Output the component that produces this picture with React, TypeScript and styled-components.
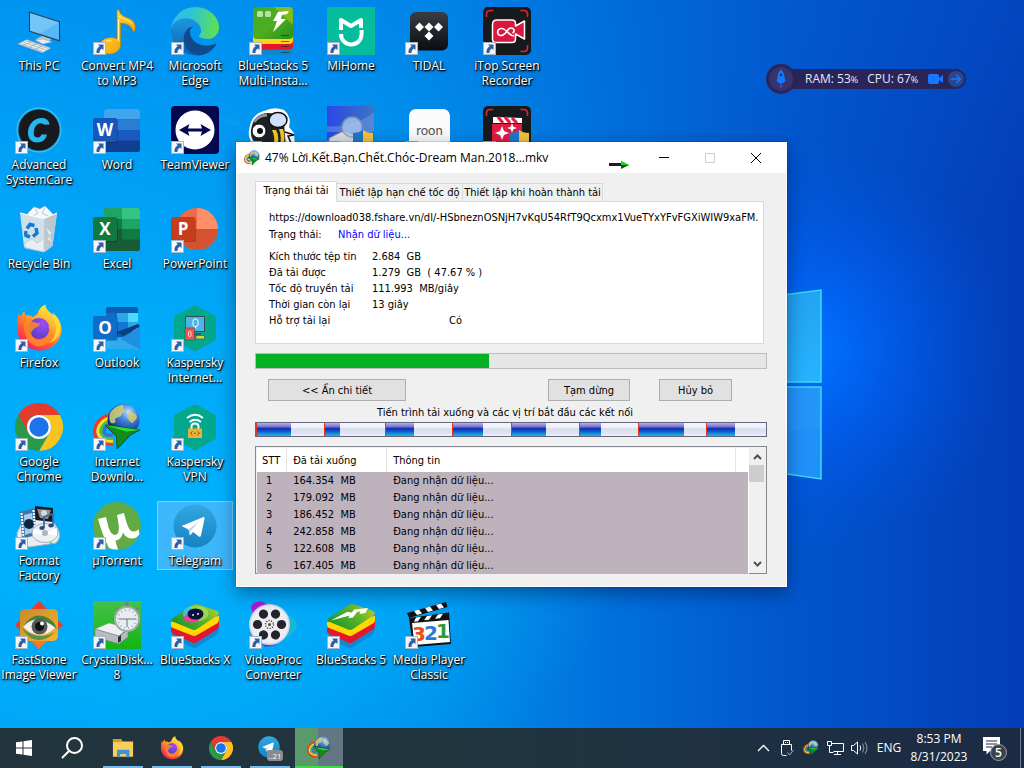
import React from 'react';
import styled, { createGlobalStyle } from 'styled-components';

const uiFont = '"Open Sans", "Noto Sans", sans-serif';
const dialogFont = '"DejaVu Sans Condensed", "DejaVu Sans", "Noto Sans", sans-serif';

const GlobalStyle = createGlobalStyle`
  *, *::before, *::after { box-sizing: border-box; }
  html, body { margin: 0; padding: 0; overflow: hidden; }
  body { font-family: ${uiFont}; font-size: 12px; }
  button, input, table { font: inherit; color: inherit; }
  button { margin: 0; padding: 0; border: 0; background: none; }
`;

/* ---------- Desktop ---------- */

const Screen = styled.div`
  display: flex;
  flex-direction: column;
  height: 100vh;
  min-height: 600px;
`;

const Desktop = styled.main`
  position: relative;
  flex: 1;
  overflow: hidden;
  background: #0a8ff0;
`;

const Wallpaper = styled.svg`
  position: absolute;
  inset: 0;
  width: 100%;
  height: 100%;
`;

const IconGrid = styled.div`
  position: relative;
  display: grid;
  grid-template-columns: repeat(7, 78px);
  grid-template-rows: repeat(7, 99px);
  padding-top: 6px;
`;

const Shortcut = styled.a<{ $col: number; $row: number; $selected?: boolean }>`
  grid-column: ${(p) => p.$col};
  grid-row: ${(p) => p.$row};
  align-self: start;
  justify-self: center;
  display: flex;
  flex-direction: column;
  align-items: center;
  gap: 3px;
  width: 76px;
  padding-bottom: 1px;
  color: #fff;
  text-decoration: none;
  border: 1px solid ${(p) => (p.$selected ? 'rgba(160, 215, 255, 0.7)' : 'transparent')};
  background: ${(p) => (p.$selected ? 'rgba(120, 190, 250, 0.5)' : 'transparent')};
`;

const ShortcutArt = styled.svg`
  display: block;
  width: 48px;
  height: 48px;
  overflow: visible;
`;

const ShortcutLabel = styled.span`
  display: block;
  font-size: 12px;
  line-height: 15px;
  text-align: center;
  white-space: nowrap;
  text-shadow: 1px 1px 1px #000, 0 1px 2px rgba(0, 0, 0, 0.9), 1px 1px 3px rgba(0, 0, 0, 0.6);
`;

const LabelLine = styled.span`
  display: block;
`;

/* ---------- Performance widget ---------- */

const Widget = styled.aside`
  position: absolute;
  top: 64px;
  right: 58px;
  display: flex;
  align-items: center;
  width: 200px;
  height: 30px;
`;

const WidgetBadge = styled.svg`
  position: relative;
  flex: none;
  width: 30px;
  height: 30px;
`;

const WidgetPill = styled.div`
  display: flex;
  align-items: center;
  flex: 1;
  height: 20px;
  margin-left: -10px;
  padding-left: 19px;
  padding-right: 2px;
  gap: 9px;
  border-radius: 0 10px 10px 0;
  background: #29255a;
  color: #e6e8f5;
  font-size: 12px;
  line-height: 20px;
  white-space: nowrap;
`;

const Small = styled.small`
  font-size: 9px;
`;

const WidgetIcons = styled.span`
  display: flex;
  align-items: center;
  gap: 5px;
  margin-left: auto;
`;

const WidgetButton = styled.button`
  display: grid;
  place-items: center;
  height: 16px;
`;

/* ---------- Download dialog ---------- */

const Dialog = styled.section`
  position: absolute;
  top: 142px;
  left: 236px;
  width: 551px;
  border: 1px solid #fff;
  background: #f0f0f0;
  color: #000;
  font-family: ${dialogFont};
  font-size: 11px;
  line-height: 16px;
  box-shadow: 0 6px 18px rgba(0, 10, 50, 0.45), 0 0 1px rgba(0, 20, 60, 0.7);
`;

const TitleBar = styled.header`
  display: flex;
  align-items: center;
  height: 30px;
  padding: 0 7px;
  background: #fff;
  font-family: ${uiFont};
`;

const Title = styled.h1`
  flex: 1;
  margin: 0 0 0 5px;
  font-size: 12px;
  font-weight: 400;
  line-height: 16px;
  white-space: nowrap;
`;

const DragArrow = styled.svg`
  width: 20px;
  height: 22px;
  margin-right: 12px;
`;

const WindowButton = styled.button`
  display: grid;
  place-items: center;
  width: 46px;
  height: 28px;
`;

const DialogBody = styled.div`
  padding: 8px 19px 12px 18px;
`;

const TabList = styled.div`
  display: flex;
  align-items: flex-end;
  height: 20px;
`;

const Tab = styled.button<{ $active?: boolean; $width: number }>`
  position: relative;
  z-index: ${(p) => (p.$active ? 1 : 0)};
  width: ${(p) => p.$width}px;
  height: ${(p) => (p.$active ? 21 : 18)}px;
  margin-bottom: ${(p) => (p.$active ? -1 : 0)}px;
  padding-bottom: ${(p) => (p.$active ? 2 : 0)}px;
  border: 1px solid #d9d9d9;
  border-bottom: 0;
  border-left-width: ${(p) => (p.$active ? 1 : 0)}px;
  background: ${(p) => (p.$active ? '#fff' : '#f0f0f0')};
  line-height: 18px;
  white-space: nowrap;
`;

const Panel = styled.div`
  height: 143px;
  margin-right: 3px;
  padding: 8px 3px 0 13px;
  border: 1px solid #d9d9d9;
  background: #fff;
`;

const UrlField = styled.input`
  display: block;
  width: 100%;
  height: 16px;
  padding: 0;
  border: 0;
  background: transparent;
  outline: 0;
`;

const Details = styled.dl`
  display: grid;
  grid-template-columns: 103px 1fr;
  grid-auto-rows: 16px;
  margin: 6px 0 0;
  white-space: pre;
`;

const StatusRow = styled(Details)`
  grid-template-columns: 69px 1fr;
  margin-top: 1px;
`;

const Term = styled.dt``;

const Value = styled.dd<{ $link?: boolean; $inset?: boolean }>`
  margin: 0;
  padding-left: ${(p) => (p.$inset ? 77 : 0)}px;
  color: ${(p) => (p.$link ? '#0000ff' : 'inherit')};
`;

const Progress = styled.progress`
  display: block;
  width: 100%;
  height: 16px;
  margin-top: 9px;
  appearance: none;
  border: 1px solid #bcbcbc;
  background: #e6e6e6;
  &::-webkit-progress-bar { background: #e6e6e6; }
  &::-webkit-progress-value { background: #06b025; }
`;

const ButtonRow = styled.div`
  display: flex;
  justify-content: space-between;
  margin-top: 10px;
  padding: 0 35px 0 13px;
`;

const ButtonGroup = styled.div`
  display: flex;
  gap: 29px;
`;

const PushButton = styled.button<{ $width: number }>`
  width: ${(p) => p.$width}px;
  height: 22px;
  padding-top: 2px;
  border: 1px solid #adadad;
  background: #e1e1e1;
`;

const Caption = styled.p`
  margin: 4px 0 1px;
  padding-right: 12px;
  text-align: center;
`;

const SegmentBar = styled.div`
  display: flex;
  height: 15px;
  border: 1px solid #62667e;
`;

const Segment = styled.span<{ $size: number; $done: boolean }>`
  flex: ${(p) => p.$size} 1 0;
  box-shadow: ${(p) => (p.$done ? 'inset 1px 0 #e8301c' : 'none')};
  background: ${(p) =>
    p.$done
      ? 'linear-gradient(#b4b0ee 0%, #7a74d0 28%, #5a58c4 34%, #0f34b4 42%, #1250c4 62%, #1590dc 82%, #19b4ee 100%)'
      : 'linear-gradient(#f4f5fc 0%, #eef0f9 35%, #d9dded 45%, #dfe3f1 75%, #eef0f9 100%)'};
`;

const ListBox = styled.div`
  display: flex;
  height: 128px;
  margin-top: 9px;
  padding: 1px;
  border: 1px solid #828790;
  background: #f0f0f0;
`;

const ListTable = styled.table`
  flex: 1;
  border-collapse: separate;
  border-spacing: 0;
  table-layout: fixed;
  border-right: 1px solid #fff;
  background: #beb2bc;
  white-space: pre;
`;

const HeadCell = styled.th<{ $width?: number }>`
  width: ${(p) => (p.$width ? `${p.$width}px` : 'auto')};
  height: 24px;
  padding: 2px 6px 0;
  border-right: 1px solid #e2e2e2;
  background: #fff;
  font-weight: 400;
  text-align: left;
  &:first-child { padding-left: 5px; }
  &:last-child { border-right: 0; }
`;

const Cell = styled.td<{ $number?: boolean }>`
  height: 17px;
  padding: 1px ${(p) => (p.$number ? 9 : 6)}px 0;
  line-height: 16px;
`;

const ScrollBar = styled.div`
  display: flex;
  flex-direction: column;
  width: 16px;
  background: #f0f0f0;
`;

const ScrollButton = styled.button`
  display: grid;
  place-items: center;
  height: 17px;
`;

const ScrollThumb = styled.div`
  height: 17px;
  margin-right: 1px;
  margin-bottom: auto;
  background: #cdcdcd;
`;

/* ---------- Taskbar ---------- */

const Taskbar = styled.footer`
  display: flex;
  flex: none;
  height: 40px;
  background: linear-gradient(90deg, #22353d 0%, #20343f 50%, #1b2b45 100%);
  color: #fff;
  font-size: 12px;
`;

const TaskGroup = styled.div<{ $gap?: boolean }>`
  display: flex;
  gap: ${(p) => (p.$gap ? 1 : 0)}px;
  padding-left: ${(p) => (p.$gap ? 3 : 0)}px;
`;

const TaskButton = styled.button<{ $state?: 'open' | 'busy' }>`
  position: relative;
  display: grid;
  place-items: center;
  width: 48px;
  height: 40px;
  background: ${(p) =>
    p.$state === 'busy' ? 'linear-gradient(90deg, #5a9a6a 48%, #647681 48%)' : 'transparent'};
  &::after {
    content: '';
    position: absolute;
    bottom: 0;
    left: ${(p) => (p.$state === 'busy' ? 0 : 4)}px;
    right: ${(p) => (p.$state === 'busy' ? 0 : 4)}px;
    height: ${(p) => (p.$state ? 2 : 0)}px;
    background: ${(p) => (p.$state === 'busy' ? '#42d94a' : '#76b9ed')};
  }
`;

const Tray = styled.div`
  display: flex;
  align-items: center;
  margin-left: auto;
`;

const TrayButton = styled.button<{ $width: number }>`
  display: grid;
  place-items: center;
  width: ${(p) => p.$width}px;
  height: 40px;
  line-height: 18px;
`;

const ShowDesktop = styled.button`
  width: 4px;
  height: 40px;
  border-left: 1px solid #6d7d8c;
`;

const ClockLine = styled.span`
  display: block;
`;

/* ---------- Drawings ---------- */

const OfficeBadge = ({ letter, fill }: { letter: string; fill: string }) => (
  <>
    <rect x="1" y="13" width="24" height="24" rx="2" fill="#000" opacity=".22" />
    <rect x="0" y="12" width="24" height="24" rx="2" fill={fill} />
    <text x="12" y="30" textAnchor="middle" fontFamily="Open Sans" fontWeight="700" fontSize="17" fill="#fff">
      {letter}
    </text>
  </>
);

const ShortcutMark = () => (
  <g transform="translate(0 35)">
    <rect x=".5" y=".5" width="12" height="12" fill="#f5f6f8" stroke="#a9b4c2" />
    <path d="M5 2.5h5.5V8L8.800 6.400C7 7.600 6.300 9 6.500 11H3.500C3.200 8 4.300 5.700 6.700 4.300z" fill="#2c5ea8" />
  </g>
);

const ThisPc = () => (
  <>
    <path d="M21 32l6-3 9 3-2 3-7 2z" fill="#b9c4cf" />
    <path d="M20 33l8 4 9-2-9-3z" fill="#e7edf2" stroke="#97a4b0" strokeWidth=".5" />
    <path d="M14 4.500l31 10v20l-31-10z" fill="#2e3c48" />
    <path d="M15 6l29 9.300v17.600L15 23.700z" fill="#58b7f6" />
    <path d="M15 6l29 9.300-19 11.400-10-3z" fill="#8fd0fb" opacity=".5" />
    <path d="M2.700 37l9-4.500L36 41l-8.500 4.700z" fill="#e9eef2" stroke="#8794a1" strokeWidth=".5" />
    <path d="M5 36.500l23 8M8 35l23 8M11 33.700l22.500 7.900M8 38.500l9-4.500M14 40.500l8.500-4.500M20 42.800l8.500-4.700" stroke="#9aa6b2" strokeWidth=".7" />
  </>
);

const MusicNote = () => (
  <>
    <defs>
      <linearGradient id="gold" x1="0" y1="0" x2="1" y2="1">
        <stop offset="0" stopColor="#fff2a0" /><stop offset=".4" stopColor="#ffc31f" /><stop offset="1" stopColor="#ef9500" />
      </linearGradient>
    </defs>
    <path d="M24 3h2c1 5 5 6.500 9 8 6.500 2.500 8.500 7 6.500 13-.4 1-1.200 1-1.500 0C38.500 18 33 16.500 27.500 16v22c0 5-5 9-11.500 9-5.500 0-9-3-9-8 0-5 5-8.500 11-8.500 2.200 0 4.300.5 6 1.500z" fill="url(#gold)" stroke="#c28300" strokeWidth=".7" />
    <path d="M25.500 9c4 3 10 3.500 14 8M9.500 37c2-3 6-4 9-3M25.500 12v22" stroke="#fff3ae" strokeWidth="1" fill="none" />
  </>
);

const Edge = () => (
  <g transform="scale(.1875)">
    <defs>
      <linearGradient id="edgeTop" x1="0" y1=".4" x2="1" y2=".5">
        <stop offset="0" stopColor="#35b8f0" /><stop offset=".45" stopColor="#2fc6cf" /><stop offset="1" stopColor="#62e04c" />
      </linearGradient>
      <linearGradient id="edgeMid" x1="0" y1="0" x2="0" y2="1">
        <stop offset="0" stopColor="#1b9de2" /><stop offset="1" stopColor="#0a5fb5" />
      </linearGradient>
    </defs>
    <path fill="#114a8b" d="M235.700 195.500a93.700 93.700 0 0 1-10.600 4.700 101.900 101.900 0 0 1-35.900 6.400c-47.300 0-88.500-32.500-88.500-74.300a31.500 31.500 0 0 1 16.400-27.300c-42.800 1.800-53.800 46.400-53.800 72.500 0 74 68.100 81.400 82.800 81.400 7.900 0 19.800-2.300 27-4.600l1.300-.4a128.300 128.300 0 0 0 66.600-52.800 4 4 0 0 0-5.300-5.600z" />
    <path fill="url(#edgeMid)" d="M105.700 241.400a79.200 79.200 0 0 1-22.700-21.300 80.700 80.700 0 0 1 29.500-120c3.200-1.500 8.500-4.100 15.600-4a32.400 32.400 0 0 1 25.700 13 31.900 31.900 0 0 1 6.300 18.700c0-.2 24.500-79.600-80-79.600-43.900 0-80 41.700-80 78.200a130.200 130.200 0 0 0 12.100 56 128 128 0 0 0 156.400 67 75.500 75.500 0 0 1-62.800-8z" />
    <path fill="url(#edgeTop)" d="M152.300 148.900c-.9 1-3.400 2.500-3.400 5.600 0 2.600 1.700 5.200 4.800 7.300 14.300 10 41.400 8.600 41.500 8.600a59.600 59.600 0 0 0 30.300-8.300 61.400 61.400 0 0 0 30.400-52.900c.3-22.400-8-37.300-11.300-43.900C223.500 23.900 177.700 0 128 0A128 128 0 0 0 0 126.200c.5-36.500 36.800-66 80-66 3.500 0 23.500.3 42 10a72.600 72.600 0 0 1 30.900 29.300c6.100 10.600 7.200 24.100 7.200 29.500s-2.700 13.300-7.800 19.900z" />
  </g>
);

const MultiInstance = () => (
  <>
    <defs>
      <linearGradient id="miGreen" x1="0" y1="0" x2="1" y2="1">
        <stop offset="0" stopColor="#3fa92c" /><stop offset=".5" stopColor="#4fae1f" /><stop offset="1" stopColor="#2a8f1c" />
      </linearGradient>
    </defs>
    <rect x="4" y="20" width="40" height="28" rx="4" fill="#0f86c9" />
    <rect x="4" y="16" width="40" height="26.500" rx="4" fill="#e0182a" />
    <rect x="4" y="12" width="40" height="25" rx="4" fill="#ffd21a" />
    <rect x="4" y="0" width="40" height="32" rx="4" fill="url(#miGreen)" />
    <path d="M25 0h15a4 4 0 0 1 4 4v14z" fill="#a5c81e" opacity=".6" />
    <rect x="8" y="4" width="6" height="6" rx="1.500" fill="#b7e0a4" /><rect x="16" y="4" width="6" height="6" rx="1.500" fill="#b7e0a4" />
    <path d="M29 5l11-1-2 3-5 1-1 4h5L24 25l4-11h-4z" fill="#fff" />
    <path d="M32 28.500h8M32 34.500h8M32 39.500h8M32 45.500h8" stroke="#223" strokeWidth="1" opacity=".6" />
  </>
);

const MiHome = () => (
  <>
    <rect width="48" height="48" fill="#05bc9c" />
    <path d="M14 23V13l10 6 10-6v8M34.500 23c1 9-3 14-9.500 14.500-6 .3-11-4-11-10.500" fill="none" stroke="#fff" strokeWidth="4" strokeLinejoin="round" />
  </>
);

const Tidal = () => (
  <>
    <defs><linearGradient id="tidal" x1="0" y1="0" x2="0" y2="1"><stop offset="0" stopColor="#3b3d45" /><stop offset="1" stopColor="#0b0c10" /></linearGradient></defs>
    <rect x="5" y="5" width="38" height="38.500" rx="6" fill="url(#tidal)" />
    <path d="M14.500 15.500l4.500 4.500-4.500 4.500L10 20zM24 15.500l4.500 4.500-4.500 4.500-4.500-4.500zM33.500 15.500L38 20l-4.500 4.500L29 20zM24 24.500l4.500 4.500-4.500 4.500-4.500-4.500z" fill="#fff" />
  </>
);

const RecorderFrame = () => (
  <>
    <rect width="48" height="48" rx="5" fill="#171a1d" />
    <path d="M3.500 10V7q0-3.500 4-3.500h3M37.500 3.500h3q4 0 4 3.500v3M37.500 44.500h3q4 0 4-3.500v-3" fill="none" stroke="#e5203a" strokeWidth="1.600" />
  </>
);

const ScreenRecorder = () => (
  <>
    <RecorderFrame />
    <path d="M14 13h15q3.500 0 3.500 3.500v2.500l9-5v18l-9-5v5q0 3.500-3.500 3.500H13q-3.500 0-3.500-3.500V17.500Q9.500 13 14 13z" fill="#d7193f" stroke="#fff" strokeWidth="1.500" strokeLinejoin="round" />
    <path d="M31 29c-5 0-8-8-12.500-7.500-5 .5-5 7-.5 7 5 0 6-7.500 10-7.500 3.500 0 4 4 1.500 5" fill="none" stroke="#fff" strokeWidth="1.700" />
  </>
);

const SystemCare = () => (
  <>
    <circle cx="24" cy="24" r="23" fill="#1b91c9" />
    <circle cx="24" cy="24" r="22" fill="none" stroke="#2dc4f7" strokeWidth="1.300" />
    <circle cx="24" cy="24" r="20.500" fill="#17191c" />
    <path d="M34.500 18.500c-.6-4-3-6.500-8-6.500-7 0-12 5-13.300 12-1.300 7.500 2.300 12.500 8.800 12.500 5.500 0 9-3 10-8h-5.500c-.8 2-2 3-4 3-3.300 0-4.300-3-3.500-7 .9-4.500 3.500-7.300 6.700-7.300 2 0 3 .8 3.300 1.500z" fill="#27b5ee" />
  </>
);

const Word = () => (
  <>
    <rect x="11" y="3" width="36" height="43" rx="2" fill="#103f91" />
    <path d="M11 13.500h36V5a2 2 0 0 0-2-2H13a2 2 0 0 0-2 2z" fill="#41a5ee" />
    <path d="M11 13.500h36V24H11z" fill="#2b7cd3" /><path d="M11 24h36v10.500H11z" fill="#185abd" />
    <OfficeBadge letter="W" fill="#1857b8" />
  </>
);

const Excel = () => (
  <>
    <rect x="11" y="3" width="36" height="43" rx="2" fill="#185c37" />
    <path d="M13 3h16v11H11V5a2 2 0 0 1 2-2z" fill="#21a366" /><path d="M29 3h16a2 2 0 0 1 2 2v9H29z" fill="#33c481" />
    <path d="M11 14h18v10H11z" fill="#107c41" /><path d="M29 14h18v10H29z" fill="#21a366" /><path d="M29 24h18v10.500H29z" fill="#107c41" />
    <OfficeBadge letter="X" fill="#10793f" />
  </>
);

const PowerPoint = () => (
  <>
    <circle cx="26" cy="24" r="21" fill="#ed6c47" />
    <path d="M26 3a21 21 0 0 1 21 21H26z" fill="#ff8f6b" /><path d="M5 24h42a21 21 0 0 1-42 0z" fill="#d35230" />
    <OfficeBadge letter="P" fill="#c43e1c" />
  </>
);

const Outlook = () => (
  <>
    <path d="M13 5a2 2 0 0 1 2-2h28a2 2 0 0 1 2 2v28H13z" fill="#0a5cad" />
    <path d="M13 9h11v9H13z" fill="#0f6cc4" /><path d="M24 9h11v9H24z" fill="#28a8ea" /><path d="M35 9h10v9H35z" fill="#50d9ff" />
    <path d="M24 18h11v9H24z" fill="#0f78d4" /><path d="M35 18h10v9H35z" fill="#28a8ea" />
    <path d="M45 20l2 2.500L30 32l-6-4z" fill="#0a3d79" />
    <path d="M47 23v20a2.500 2.500 0 0 1-2.500 2.500H13L30 33z" fill="#1f8fe0" /><path d="M13 27l34 18.500H14a2 2 0 0 1-2-2z" fill="#35b4f0" opacity=".75" />
    <OfficeBadge letter="O" fill="#0f6cc9" />
  </>
);

const TeamViewer = () => (
  <>
    <rect width="48" height="48" rx="4" fill="#04084e" />
    <circle cx="24" cy="24" r="19.500" fill="#fff" />
    <path d="M8 24l10.500-6-1.500 4.500h14L29.500 18 40 24l-10.500 6 1.500-4.500H17l1.500 4.500z" fill="#04084e" />
  </>
);

const RecycleBin = () => (
  <>
    <path d="M13 8l6-6 6 2 5-3 6 6 3 4-12 3-14-3z" fill="#f6f8fa" stroke="#b9c4cc" strokeWidth=".6" />
    <path d="M20 4l3 4-5 3M30 3l-3 5 6 3" stroke="#a7b3bd" strokeWidth=".8" fill="none" />
    <path d="M5 8l24 5.500L42 8l-4.500 33-8 6L9 42z" fill="#dde4e9" opacity=".93" />
    <path d="M29 13.500L42 8l-4.500 33-8 6z" fill="#bcc8d0" />
    <path d="M10 38l7-4 5 4 7-5v14L10 43zM31 22l6 6-5 6 5 4" stroke="#c2cbd2" fill="#eef2f4" opacity=".8" />
    <path d="M5 8l24 5.500L42 8" stroke="#fff" fill="none" />
    <g fill="none" stroke="#1779ce" strokeWidth="3.500"><path d="M12 23.500l3-4 4.500 1" /><path d="M21 23l1 5-4 3.500" /><path d="M15 32l-4-1.500-.5-4.500" /></g>
  </>
);

const Firefox = () => (
  <>
    <defs>
      <linearGradient id="fxFlame" x1=".85" y1=".05" x2=".25" y2="1">
        <stop offset="0" stopColor="#fff14a" /><stop offset=".35" stopColor="#ffb32a" /><stop offset=".68" stopColor="#ff5a35" /><stop offset="1" stopColor="#f3176a" />
      </linearGradient>
      <radialGradient id="fxCore" cx=".7" cy=".25" r=".9"><stop offset="0" stopColor="#a34cf0" /><stop offset="1" stopColor="#4d3bc8" /></radialGradient>
    </defs>
    <path d="M3.500 10c1 1.500 1.500 2 2.500 2.500C7 9 9 7.500 9.500 7c0 2 .5 3.500 1.500 4.500 3-.7 5 0 7 1.500 1.500-1 3-2.500 4.500-3C23 7 26 2 30.500.5 30.500 6 33 7 36 10c1 1 1.500 2 2 3 0-1.500 0-3-1-4.500 6 4 9.500 10 9.500 17.500C46 38 36 46.500 25 46.500 12 46.500 2.500 37 2 25 2 19 2.500 14 3.500 10z" fill="url(#fxFlame)" />
    <circle cx="24" cy="24.500" r="10.500" fill="url(#fxCore)" />
    <path d="M9 19c3-2 7-2 10-1 2 1 4 1.500 6 1.500-.5 3-3.500 3.500-5 4.500-2 1.500-3 3-4 5 1.500 6 7 8 12 6 6-2.500 7-8 5-13 4 3 5 8 2.500 13-3 6-9 8.500-15 7C13 39 8 30 9 19z" fill="#ff8a26" opacity=".85" />
    <path d="M30.500.5C30 9 40 11 41 22c.5 8-3 14-8 17 9-1.500 13-9 12-18C44 12 31 9 30.500.5z" fill="#ffdf38" opacity=".8" />
  </>
);

const Chrome = () => (
  <>
    <path d="M24 12H44.800a24 24 0 0 0-41.600 0L13.600 30A12 12 0 0 1 24 12Z" fill="#e33b2e" />
    <path d="M34.400 30 24 48A24 24 0 0 0 44.800 12H24A12 12 0 0 1 34.400 30Z" fill="#fcc31e" />
    <path d="M13.600 30 3.200 12A24 24 0 0 0 24 48L34.400 30A12 12 0 0 1 13.600 30Z" fill="#2a9a48" />
    <circle cx="24" cy="24" r="12" fill="#fff" /><circle cx="24" cy="24" r="9.700" fill="#1f73e8" />
  </>
);

const Idm = () => (
  <>
    <defs>
      <radialGradient id="idmGlobe" cx=".65" cy=".25" r=".8"><stop offset="0" stopColor="#c5e4ff" /><stop offset=".3" stopColor="#4d8fe0" /><stop offset=".7" stopColor="#1a48a4" /><stop offset="1" stopColor="#061a52" /></radialGradient>
    </defs>
    <g fill="none" strokeWidth="3.400">
      <path d="M18 12C8 13 1.700 21 1.700 29 2 37 10 42 20 41" stroke="#f0392b" /><path d="M18 15C10 16 5 23 5 29c1 6 7 10 15 9" stroke="#ffd928" />
      <path d="M19 18c-7 1-11 6-11 11 1 4 5 7 12 6" stroke="#3fc23f" /><path d="M20 21c-6 1-9 4-9 8 1 3 4 4 9 3" stroke="#3b6fe0" />
    </g>
    <circle cx="30.500" cy="17" r="16" fill="url(#idmGlobe)" />
    <path d="M17 10c4-6 9-8 13-8 2 2-1 4 2 5 0 3-4 3-4 6-3 2-6 1-6 4 2 2-1 4-4 3-2-2-2-6-1-10zM35 10c4-2 7 0 9 3 0 4-3 4-4 7-3 0-4-4-6-5z" fill="#d3cf72" opacity=".85" />
    <path d="M12 22l35 5-9 4.500L24 46l-.5-12.500z" fill="#138a1a" stroke="#06450c" strokeWidth=".8" />
    <path d="M12 22l35 5-14 1.500z" fill="#2ee02e" />
  </>
);

const Hexagon = () => (
  <path d="M22 2q2-1 4 0l17 9q2 1 2 3v20q0 2-2 3l-17 9.500q-2 1-4 0L5 37q-2-1-2-3V14q0-2 2-3z" fill="#03a88c" />
);

const KasperskyIs = () => (
  <>
    <Hexagon />
    <path d="M14.500 12.500h19v15h-19z" fill="#4bb5e8" stroke="#3a4a52" strokeWidth="1" /><path d="M20 30h10" stroke="#3a4a52" strokeWidth="1.500" />
    <rect x="14" y="24" width="9.500" height="12" fill="#f0564a" stroke="#3a4a52" strokeWidth=".6" /><rect x="25" y="31.500" width="8.500" height="3.500" fill="#c2d94c" stroke="#3a4a52" strokeWidth=".6" />
    <path d="M22 20.500v-3q0-2.500 2.500-2.500t2.500 2.500v3q0 2-2.500 2t-2.500-2zM24.500 22.500v2" fill="none" stroke="#fff" /><rect x="17.500" y="27.500" width="2.500" height="5" rx="1.200" fill="none" stroke="#fff" strokeWidth=".8" />
  </>
);

const KasperskyVpn = () => (
  <>
    <Hexagon />
    <path d="M16 15c5-4 11-4 16 0M18.500 19c4-3 7.500-3 11.500 0M20.500 27v-3.500q0-3 3.500-3t3.500 3V27" fill="none" stroke="#fff" strokeWidth="1.900" />
    <rect x="17" y="25.500" width="14" height="9.500" fill="#efb036" /><path d="M21.500 28.500L19.500 30.300l2 1.700M26.500 28.500l2 1.800-2 1.700M23 30.300h2" fill="none" stroke="#7c5510" />
  </>
);

const FormatFactory = () => (
  <>
    <path d="M2 31l7-14 26-2 8 12q4 8-2 14L14 45Q1 42 2 31z" fill="#e9edf0" stroke="#abb5bd" />
    <path d="M20 4l18 2v14l-18-2z" fill="#17191c" /><path d="M22 7l14 1-3 9-8-1z" fill="#88929b" /><circle cx="29" cy="11" r="3" fill="#d5dade" />
    <path d="M5 10l15-4 1 27-14 4z" fill="#3f74ab" /><path d="M9 13l8-2 2 19-9 3z" fill="#a9cbe8" /><circle cx="14" cy="22" r="5" fill="#0e2345" /><path d="M6.500 11l2 25M18.500 8l2 24" stroke="#fff" strokeWidth="2" strokeDasharray="2 1" />
    <ellipse cx="30" cy="31" rx="13" ry="9.500" fill="#eef1f4" stroke="#9fb0bd" /><path d="M30 31l12-5v8zM30 31l-12-4v6z" fill="#fff" /><circle cx="30" cy="31" r="3" fill="#aab7c2" />
    <path d="M29 26V15l9-3v11" stroke="#44689c" strokeWidth="1.800" fill="none" /><ellipse cx="27" cy="26" rx="2.700" ry="2" fill="#2b4a80" /><ellipse cx="36" cy="23.500" rx="2.700" ry="2" fill="#2b4a80" />
    <circle cx="36" cy="41" r="1" fill="#4ad14a" />
  </>
);

const UTorrent = () => (
  <>
    <circle cx="24" cy="24" r="24" fill="#62ab42" />
    <path d="M5 17l8-2c2 9 4 18 9 18 5-.3 4.500-8 2-20l7-2c3 12 5 19 10 18.500 2 0 3.500-1 4.500-2.500l1 5c-1.500 2.500-4 4.500-7.500 4.500-4 0-7-2-9-6-1 4.500-3.500 7.500-7.500 8 .5 3 1.500 6 2.500 9q-5 .3-9-1.500C12 38 8 28 5 17z" fill="#fff" />
  </>
);

const Telegram = () => (
  <>
    <defs><linearGradient id="tg" x1="0" y1="0" x2="0" y2="1"><stop offset="0" stopColor="#33a8e2" /><stop offset="1" stopColor="#1582c4" /></linearGradient></defs>
    <circle cx="24" cy="24" r="21.500" fill="url(#tg)" />
    <path d="M10.500 24L32 15.200q2-.7 1.500 1.600L30 33.500q-.5 2-2.500.7L22 30l-3 3.500-1.500-6z" fill="#fff" /><path d="M17.500 27.500L28 19.500 20 28.500l-1 5z" fill="#b5d7ee" />
  </>
);

const FastStone = () => (
  <>
    <path d="M24 0l24 24-24 24L0 24z" fill="#e2402f" /><path d="M24 30l12 6-12 12-12-12z" fill="#f47a28" />
    <defs><linearGradient id="fs" x1="0" y1="0" x2="1" y2="1"><stop offset="0" stopColor="#c9892b" /><stop offset="1" stopColor="#f7b42c" /></linearGradient></defs>
    <rect x="5" y="8" width="38" height="32" rx="5" fill="url(#fs)" />
    <path d="M8 26q14-18 33 0-16 16-33 0z" fill="#f2f2ea" /><path d="M8 26Q16 12 28 15q11 3 14 13-14-12-24-9-6 2-10 7z" fill="#4c7f3a" />
    <path d="M7 27q16 14 33 4-12 12-24 6-6-4-9-10z" fill="#5b9146" />
    <circle cx="24.500" cy="25.500" r="8" fill="#55595c" /><circle cx="24.500" cy="25.500" r="4.500" fill="#111" /><circle cx="27" cy="22.500" r="2" fill="#fff" />
  </>
);

const CrystalDisk = () => (
  <>
    <defs><linearGradient id="cd" x1="0" y1="0" x2="0" y2="1"><stop offset="0" stopColor="#45c14b" /><stop offset="1" stopColor="#14b414" /></linearGradient></defs>
    <rect width="48" height="48" fill="url(#cd)" />
    <path d="M2 28l14-6 19 5-9 8z" fill="#eef0f2" stroke="#8b9299" strokeWidth=".5" /><path d="M2 28l24 7 9-6v7l-9 7-24-7z" fill="#b5bbc1" stroke="#70777e" strokeWidth=".5" /><path d="M25 36v6l3-2v-6z" fill="#26323a" />
    <path d="M34 1v5" stroke="#777f86" strokeWidth="3" /><path d="M23 7l3 3M45 7l-3 3" stroke="#777f86" strokeWidth="2" />
    <circle cx="34" cy="18" r="13" fill="#a4acb2" /><circle cx="34" cy="18" r="11" fill="#e7edf0" /><path d="M26 18h17M34 18v8" stroke="#6b747b" /><circle cx="34" cy="18" r="9" fill="none" stroke="#9aa3aa" strokeDasharray="1 3" strokeWidth="1.500" />
  </>
);

const StackLayers = () => (
  <>
    <defs><linearGradient id="bs" x1="0" y1=".8" x2="1" y2=".2"><stop offset="0" stopColor="#16912f" /><stop offset=".6" stopColor="#5eb427" /><stop offset="1" stopColor="#b5cf27" /></linearGradient></defs>
    <path d="M2 32l23-13 23 8q0 5-3 7L26 46q-3 2-6 0L2 38z" fill="#167fc4" opacity=".75" />
    <path d="M0 27l48-7v5q0 2-2 3.500L26 41q-3 2-6 0L2 33q-2-1-2-3z" fill="#e31530" />
    <path d="M0 21l48-6v4q0 2-2 3.500L26 34q-3 2-6 0L2 27q-2-1-2-3z" fill="#ffd800" />
    <path d="M2 17L22 4q2-1.500 5-.5L46 10q3 1.500 1 4L26 28q-3 2-6 0L1.500 20.500Q-.5 19 2 17z" fill="url(#bs)" />
  </>
);

const BlueStacksX = () => (
  <>
    <StackLayers />
    <ellipse cx="25" cy="12.500" rx="12.500" ry="8" fill="#b8e26b" opacity=".6" /><ellipse cx="19" cy="13" rx="7" ry="6" fill="#3ac3de" /><ellipse cx="21" cy="17" rx="8" ry="4.500" fill="#f23d9c" />
    <ellipse cx="24.500" cy="13" rx="8" ry="5.500" fill="#0b1040" /><circle cx="22" cy="14" r=".9" fill="#fff" /><circle cx="27" cy="13" r=".9" fill="#fff" />
  </>
);

const BlueStacks = () => (
  <>
    <StackLayers />
    <path d="M27 8.500l14-1.500-2.500 5-6 1 1-2.500-3.500.5-4 5.500-5 .5 2-2.500L4 19.500l16-8.500 5 .5z" fill="#fff" />
  </>
);

const VideoProc = () => (
  <>
    <path d="M2 5Q8-2 16 2l10 15L6 22z" fill="#b018d8" /><path d="M38 14l8 4q4 6 0 12l-8 8z" fill="#18b5d8" /><path d="M6 34l10 12 12-2z" fill="#7a2be0" />
    <circle cx="20.500" cy="23.500" r="20.500" fill="#cfd4dd" /><circle cx="20.500" cy="23.500" r="19" fill="#eceef3" />
    {[0, 60, 120, 180, 240, 300].map((a) => (
      <circle key={a} cx="32.500" cy="23.500" r="4.600" fill="#23242c" transform={`rotate(${a} 20.500 23.500)`} />
    ))}
    <circle cx="20.500" cy="23.500" r="4" fill="none" stroke="#333" strokeDasharray="1 1.500" strokeWidth="1.500" /><circle cx="20.500" cy="23.500" r="1.500" fill="#444" />
  </>
);

const MediaPlayer = () => (
  <>
    <path d="M2 12L41 1l1.500 5L4 17z" fill="#111" /><path d="M9 10l5-1.500 3 4-5 1.500zM20 7l5-1.500 3 4-5 1.500zM31 4l5-1.500 3 4-5 1.500z" fill="#fff" />
    <path d="M4 17l40-5.500L46 43 8 46z" fill="#111" /><path d="M7 22l36.500-3L45 41 9.500 44z" fill="#fff" />
    <path d="M11 16.500l5-.8-3 4.500-4 .5zM22 15l5-.8-3 4.500-5 .5zM33 13.500l5-.8-3 4.500-5 .5z" fill="#fff" />
    <g fontFamily="DejaVu Sans" fontWeight="700" fontSize="20"><text x="7" y="40" fill="#e6501e">3</text><text x="19" y="39" fill="#2b7bd6">2</text><text x="31" y="37" fill="#2f9a36">1</text></g>
  </>
);

const Bee = () => (
  <>
    <path d="M0 24Q2 8 15 5q10-5 20-1 8 7 5 17l5 6 1 14H10Q-2 36 0 24z" fill="#fff" />
    <path d="M2 24Q4 9 17 7q15-1 18 10l2 24H12Q1 36 2 24z" fill="#1d2126" /><path d="M5 16q5-7 13-7" stroke="#8a94a0" strokeWidth="3" fill="none" />
    <ellipse cx="29" cy="14" rx="9" ry="7.500" fill="#cfe0ff" stroke="#111" strokeWidth="1.500" />
    <path d="M23 24h4q4 7 1 17h-4q3-9-1-17zM30 23h4q3 8 0 17h-3q2-9-1-17z" fill="#f7c81b" /><circle cx="10" cy="25" r="7" fill="#fff" stroke="#111" /><circle cx="11" cy="25" r="3" fill="#111" /><path d="M36 26l9 3-6 1 3 7" stroke="#111" strokeWidth="1.500" fill="none" />
  </>
);

const Shield = () => (
  <>
    <path d="M26 27q6 0 10-3v24H26z" fill="#2376c6" /><path d="M36 24q4 3 10 3v21H36z" fill="#f3c33a" />
  </>
);

const ScanTool = () => (
  <>
    <defs><linearGradient id="scan" x1="0" y1="0" x2="1" y2="0"><stop offset="0" stopColor="#2b47e6" /><stop offset="1" stopColor="#3c74c4" /></linearGradient></defs>
    <rect x="0" y="0" width="47" height="48" fill="url(#scan)" /><path d="M0 20Q28 22 47 6v20H0z" fill="#6f9be6" opacity=".5" />
    <path d="M2 32l14-7 14 4v19H2z" fill="#d9dee4" stroke="#6d7884" /><circle cx="25" cy="21" r="10" fill="#a9c8ee" opacity=".8" stroke="#8f9dab" strokeWidth="1.500" />
    <Shield />
  </>
);

const Roon = () => (
  <>
    <rect x="4" y="3" width="41" height="45" rx="7" fill="#fbfbfb" />
    <text x="24.500" y="29" textAnchor="middle" fontFamily="Lato" fontSize="13" fill="#555">roon</text>
  </>
);

const VideoEditor = () => (
  <>
    <RecorderFrame />
    <path d="M9 18h30v30H13q-4 0-4-4z" fill="#e01c42" /><path d="M10 11l29 1v5H10z" fill="#fff" /><path d="M15 11l5 6M22 11l5 6M29 12l5 5" stroke="#e01c42" strokeWidth="3" />
    <path d="M19 20l2 5 5 2-5 2-2 5-2-5-5-2 5-2zM29 17l1.300 3.700L34 22l-3.700 1.300L29 27l-1.300-3.700L24 22l3.700-1.300z" fill="#fff" />
    <Shield />
  </>
);

type Entry = { col: number; row: number; lines: string[]; art: React.FC; plain?: boolean; selected?: boolean };

const shortcuts: Entry[] = [
  { col: 1, row: 1, lines: ['This PC'], art: ThisPc, plain: true },
  { col: 1, row: 2, lines: ['Advanced', 'SystemCare'], art: SystemCare },
  { col: 1, row: 3, lines: ['Recycle Bin'], art: RecycleBin, plain: true },
  { col: 1, row: 4, lines: ['Firefox'], art: Firefox },
  { col: 1, row: 5, lines: ['Google', 'Chrome'], art: Chrome },
  { col: 1, row: 6, lines: ['Format', 'Factory'], art: FormatFactory },
  { col: 1, row: 7, lines: ['FastStone', 'Image Viewer'], art: FastStone },
  { col: 2, row: 1, lines: ['Convert MP4', 'to MP3'], art: MusicNote },
  { col: 2, row: 2, lines: ['Word'], art: Word },
  { col: 2, row: 3, lines: ['Excel'], art: Excel },
  { col: 2, row: 4, lines: ['Outlook'], art: Outlook },
  { col: 2, row: 5, lines: ['Internet', 'Downlo...'], art: Idm },
  { col: 2, row: 6, lines: ['µTorrent'], art: UTorrent },
  { col: 2, row: 7, lines: ['CrystalDisk...', '8'], art: CrystalDisk },
  { col: 3, row: 1, lines: ['Microsoft', 'Edge'], art: Edge },
  { col: 3, row: 2, lines: ['TeamViewer'], art: TeamViewer },
  { col: 3, row: 3, lines: ['PowerPoint'], art: PowerPoint },
  { col: 3, row: 4, lines: ['Kaspersky', 'Internet...'], art: KasperskyIs },
  { col: 3, row: 5, lines: ['Kaspersky', 'VPN'], art: KasperskyVpn },
  { col: 3, row: 6, lines: ['Telegram'], art: Telegram, selected: true },
  { col: 3, row: 7, lines: ['BlueStacks X'], art: BlueStacksX },
  { col: 4, row: 1, lines: ['BlueStacks 5', 'Multi-Insta...'], art: MultiInstance },
  { col: 4, row: 2, lines: [], art: Bee },
  { col: 4, row: 7, lines: ['VideoProc', 'Converter'], art: VideoProc },
  { col: 5, row: 1, lines: ['MiHome'], art: MiHome },
  { col: 5, row: 2, lines: [], art: ScanTool },
  { col: 5, row: 7, lines: ['BlueStacks 5'], art: BlueStacks },
  { col: 6, row: 1, lines: ['TIDAL'], art: Tidal },
  { col: 6, row: 2, lines: [], art: Roon },
  { col: 6, row: 7, lines: ['Media Player', 'Classic'], art: MediaPlayer },
  { col: 7, row: 1, lines: ['iTop Screen', 'Recorder'], art: ScreenRecorder },
  { col: 7, row: 2, lines: [], art: VideoEditor },
];

const Art = ({ art: Drawing, size }: { art: React.FC; size: number }) => (
  <svg width={size} height={size} viewBox="0 0 48 48" aria-hidden="true"><Drawing /></svg>
);

const DesktopWallpaper = () => (
  <Wallpaper viewBox="0 0 1024 728" preserveAspectRatio="xMidYMid slice" aria-hidden="true">
    <defs>
      <linearGradient id="sky" x1="0" y1="0" x2="1" y2="0">
        <stop offset="0" stopColor="#00a6fa" /><stop offset=".22" stopColor="#00a0f6" /><stop offset=".42" stopColor="#0090ec" />
        <stop offset=".6" stopColor="#0070dc" /><stop offset=".78" stopColor="#0255cc" /><stop offset="1" stopColor="#033db8" />
      </linearGradient>
      <radialGradient id="floor" gradientUnits="userSpaceOnUse" cx="170" cy="520" r="460" gradientTransform="translate(0 150) scale(1 .7)">
        <stop offset="0" stopColor="#00b4fe" stopOpacity=".9" /><stop offset=".6" stopColor="#00b0fb" stopOpacity=".6" /><stop offset="1" stopColor="#00a0f0" stopOpacity="0" />
      </radialGradient>
      <linearGradient id="topShade" x1="0" y1="0" x2="0" y2="1">
        <stop offset="0" stopColor="#0060d8" stopOpacity=".25" /><stop offset=".3" stopColor="#0060d8" stopOpacity="0" />
      </linearGradient>
      <radialGradient id="glow" gradientUnits="userSpaceOnUse" cx="800" cy="350" r="210">
        <stop offset="0" stopColor="#0078ff" /><stop offset=".35" stopColor="#0064fa" stopOpacity=".75" /><stop offset="1" stopColor="#0050e0" stopOpacity="0" />
      </radialGradient>
      <linearGradient id="pane" x1="0" y1="0" x2="0" y2="1"><stop offset="0" stopColor="#22a4f2" /><stop offset="1" stopColor="#27b3ff" /></linearGradient>
    </defs>
    <rect width="1024" height="728" fill="url(#sky)" />
    <rect width="1024" height="728" fill="url(#topShade)" />
    <rect width="1024" height="728" fill="url(#floor)" />
    <rect width="1024" height="728" fill="url(#glow)" />
    <path d="M0 52L240 122v4z" fill="#4cc4ff" opacity=".08" />
    <path d="M700 306l121-16v92H700z" fill="url(#pane)" /><path d="M700 387h121v92l-121-18z" fill="#2496fa" />
    <path d="M787 432l34-5v52l-34-4z" fill="#1c8cf8" opacity=".5" />
    <path d="M700 306l121-16v92H700M700 387h121v92l-121-18" fill="none" stroke="#3fd8ff" strokeWidth="1.500" />
  </Wallpaper>
);

const segments = [35, 33, 16, 45, 29, 38, 31, 28, 35, 33, 22, 37, 46, 22, 29, 31];

const facts: [string, string, boolean?][] = [
  ['Kích thước tệp tin', '2.684  GB'],
  ['Đã tải được', '1.279  GB  ( 47.67 % )'],
  ['Tốc độ truyền tải', '111.993  MB/giây'],
  ['Thời gian còn lại', '13 giây'],
  ['Hỗ trợ tải lại', 'Có', true],
];

const connections = ['164.354  MB', '179.092  MB', '186.452  MB', '242.858  MB', '122.608  MB', '167.405  MB'];

const DownloadDialog = () => (
  <Dialog role="dialog" aria-labelledby="dialog-title">
    <TitleBar>
      <Art art={Idm} size={16} />
      <Title id="dialog-title">47% Lời.Kết.Bạn.Chết.Chóc-Dream Man.2018...mkv</Title>
      <DragArrow viewBox="0 0 20 22" aria-hidden="true">
        <path d="M0 16h13v3H0z" fill="#1d1d1d" /><path d="M12 14l8 4-8 4z" fill="#0b5a10" /><path d="M12 14l8 4h-8z" fill="#10e020" />
      </DragArrow>
      <WindowButton aria-label="Minimize"><svg width="10" height="10"><path d="M0 4.500h10" stroke="#000" /></svg></WindowButton>
      <WindowButton aria-label="Maximize" disabled><svg width="10" height="10"><path d="M.5.5h9v9h-9z" fill="none" stroke="#ccc" /></svg></WindowButton>
      <WindowButton aria-label="Close"><svg width="10" height="10"><path d="M0 0l10 10M10 0L0 10" stroke="#000" /></svg></WindowButton>
    </TitleBar>
    <DialogBody>
      <TabList role="tablist">
        <Tab role="tab" aria-selected="true" $active $width={82}>Trạng thái tải</Tab>
        <Tab role="tab" $width={126}>Thiết lập hạn chế tốc độ</Tab>
        <Tab role="tab" $width={140}>Thiết lập khi hoàn thành tải</Tab>
      </TabList>
      <Panel role="tabpanel">
        <UrlField readOnly aria-label="URL" value="https://download038.fshare.vn/dl/-HSbneznOSNjH7vKqU54RfT9Qcxmx1VueTYxYFvFGXiWIW9xaFM." />
        <StatusRow>
          <Term>Trạng thái:</Term>
          <Value $link>Nhận dữ liệu...</Value>
        </StatusRow>
        <Details>
          {facts.map(([label, value, inset]) => (
            <React.Fragment key={label}>
              <Term>{label}</Term>
              <Value $inset={inset}>{value}</Value>
            </React.Fragment>
          ))}
        </Details>
      </Panel>
      <Progress max={510} value={233} aria-label="47%" />
      <ButtonRow>
        <PushButton $width={138}>&lt;&lt; Ẩn chi tiết</PushButton>
        <ButtonGroup>
          <PushButton $width={82}>Tạm dừng</PushButton>
          <PushButton $width={73}>Hủy bỏ</PushButton>
        </ButtonGroup>
      </ButtonRow>
      <Caption>Tiến trình tải xuống và các vị trí bắt đầu các kết nối</Caption>
      <SegmentBar>
        {segments.map((size, i) => <Segment key={i} $size={size} $done={i % 2 === 0} />)}
      </SegmentBar>
      <ListBox>
        <ListTable>
          <thead>
            <tr><HeadCell $width={30}>STT</HeadCell><HeadCell $width={100}>Đã tải xuống</HeadCell><HeadCell>Thông tin</HeadCell><HeadCell as="td" $width={12} /></tr>
          </thead>
          <tbody>
            {connections.map((size, i) => (
              <tr key={size}><Cell $number>{i + 1}</Cell><Cell>{size}</Cell><Cell colSpan={2}>Đang nhận dữ liệu...</Cell></tr>
            ))}
          </tbody>
        </ListTable>
        <ScrollBar>
          <ScrollButton aria-label="Scroll up"><svg width="9" height="6"><path d="M1 5l3.500-3.500L8 5" fill="none" stroke="#505050" strokeWidth="2" /></svg></ScrollButton>
          <ScrollThumb />
          <ScrollButton aria-label="Scroll down"><svg width="9" height="6"><path d="M1 1l3.500 3.500L8 1" fill="none" stroke="#505050" strokeWidth="2" /></svg></ScrollButton>
        </ScrollBar>
      </ListBox>
    </DialogBody>
  </Dialog>
);

const PerformanceWidget = () => (
  <Widget>
    <WidgetBadge viewBox="0 0 30 30" aria-hidden="true">
      <circle cx="15" cy="15" r="15" fill="#29255a" /><circle cx="15" cy="15" r="12" fill="#38336c" />
      <path d="M15 5.500q3.500 3 3.500 8l1 3-2 2.500h-5l-2-2.500 1-3q0-5 3.500-8z" fill="#1677ff" /><circle cx="15" cy="11" r="1.300" fill="#29255a" /><path d="M15 19v5" stroke="#1677ff" />
    </WidgetBadge>
    <WidgetPill>
      <span>RAM: 53<Small>%</Small></span>
      <span>CPU: 67<Small>%</Small></span>
      <WidgetIcons>
        <WidgetButton aria-label="Record"><svg width="15" height="10"><rect width="11" height="10" rx="2" fill="#1677ff" /><path d="M10 5l5-4v8z" fill="#1677ff" /></svg></WidgetButton>
        <WidgetButton aria-label="Expand"><svg width="16" height="16"><circle cx="8" cy="8" r="8" fill="#27488c" /><path d="M3 8h9M8.500 4L12.500 8l-4 4" fill="none" stroke="#1677ff" strokeWidth="1.400" /></svg></WidgetButton>
      </WidgetIcons>
    </WidgetPill>
  </Widget>
);

const Explorer = () => (
  <>
    <path d="M2 5h18l3 5h23v33H2z" fill="#f8cf5c" /><path d="M2 5h18l3 6H2z" fill="#d99a1c" />
    <path d="M11 28h27v16h-7v-7H18v7h-7z" fill="#3a93dd" />
  </>
);

export default function App() {
  return (
    <>
      <GlobalStyle />
      <Screen>
        <Desktop>
          <DesktopWallpaper />
          <IconGrid>
            {shortcuts.map(({ col, row, lines, art: Drawing, plain, selected }) => (
              <Shortcut key={`${col}-${row}`} href="#" $col={col} $row={row} $selected={selected}>
                <ShortcutArt viewBox="0 0 48 48" aria-hidden="true">
                  <Drawing />
                  {!plain && <ShortcutMark />}
                </ShortcutArt>
                <ShortcutLabel>{lines.map((line) => <LabelLine key={line}>{line}</LabelLine>)}</ShortcutLabel>
              </Shortcut>
            ))}
          </IconGrid>
          <DownloadDialog />
          <PerformanceWidget />
        </Desktop>
        <Taskbar>
          <TaskGroup>
            <TaskButton aria-label="Start">
              <svg width="16" height="16"><path d="M0 2.300L6.500 1.400v6.100H0zM7.500 1.200L16 0v7.500H7.500zM0 8.500h6.500v6.100L0 13.700zM7.500 8.500H16V16l-8.500-1.200z" fill="#fff" /></svg>
            </TaskButton>
            <TaskButton aria-label="Search">
              <svg width="22" height="22" fill="none" stroke="#fff" strokeWidth="2"><circle cx="13.500" cy="8.500" r="7.500" /><path d="M8 14l-7 7" /></svg>
            </TaskButton>
          </TaskGroup>
          <TaskGroup $gap>
            <TaskButton $state="open" aria-label="File Explorer"><Art art={Explorer} size={22} /></TaskButton>
            <TaskButton $state="open" aria-label="Firefox"><Art art={Firefox} size={24} /></TaskButton>
            <TaskButton $state="open" aria-label="Chrome"><Art art={Chrome} size={24} /></TaskButton>
            <TaskButton $state="open" aria-label="Telegram">
              <svg width="26" height="26" aria-hidden="true">
                <g transform="scale(.5)"><Telegram /></g>
                <rect x="10" y="15" width="16" height="11" rx="3" fill="#868b90" />
                <text x="18" y="24" textAnchor="middle" fontFamily="Open Sans" fontSize="8" fill="#fff">..21</text>
              </svg>
            </TaskButton>
            <TaskButton $state="busy" aria-label="Internet Download Manager"><Art art={Idm} size={24} /></TaskButton>
          </TaskGroup>
          <Tray>
            <TrayButton $width={24} aria-label="Show hidden icons"><svg width="13" height="8"><path d="M1 7l5.500-5.500L12 7" fill="none" stroke="#fff" strokeWidth="1.300" /></svg></TrayButton>
            <TrayButton $width={24} aria-label="USB">
              <svg width="14" height="18" fill="none" stroke="#fff"><path d="M3.500 5.500v-4h6v4M1.500 5.500h10v6M1.500 5.500v9q0 2 2 2h3M5.500 3v1M7.500 3v1" /><path d="M7.500 13.500l2 2.500 4-5" stroke="#aab4bf" /></svg>
            </TrayButton>
            <TrayButton $width={24} aria-label="Internet Download Manager"><Art art={Idm} size={16} /></TrayButton>
            <TrayButton $width={24} aria-label="Network">
              <svg width="17" height="15" fill="none" stroke="#fff"><path d="M4.500 2.500h12v8h-10M10.500 10.500v3M7 13.500h7M.5.500h4v4h-4zM2.500 4.500v7h4" /></svg>
            </TrayButton>
            <TrayButton $width={24} aria-label="Volume">
              <svg width="17" height="14" fill="none" stroke="#fff"><path d="M.5 4.500h2l4-3.500v12l-4-3.500h-2zM9 4.500q1.500 2.500 0 5" /><path d="M11.500 2.500q3 4.500 0 9M14 1q4 6 0 12" stroke="#8f9ba8" /></svg>
            </TrayButton>
            <TrayButton $width={36}>ENG</TrayButton>
            <TrayButton $width={64}><span><ClockLine>8:53 PM</ClockLine><ClockLine>8/31/2023</ClockLine></span></TrayButton>
            <TrayButton $width={49} aria-label="Notifications">
              <svg width="25" height="26"><path d="M0 2h17v14H7l-3.500 3.500V16H0z" fill="#fff" /><path d="M3 6h11M3 9h11M3 12h6" stroke="#1b2b45" /><circle cx="15.500" cy="17.500" r="8" fill="#3c434c" stroke="#9aa2aa" /><text x="15.500" y="22" textAnchor="middle" fontFamily="Open Sans" fontWeight="600" fontSize="12" fill="#fff">5</text></svg>
            </TrayButton>
            <ShowDesktop aria-label="Show desktop" />
          </Tray>
        </Taskbar>
      </Screen>
    </>
  );
}
